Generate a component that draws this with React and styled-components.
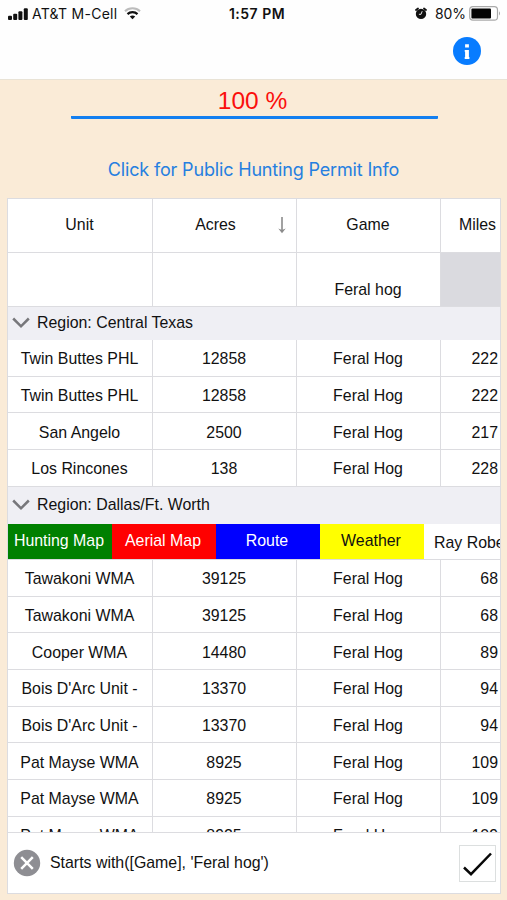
import React from "react";
import styled, { createGlobalStyle } from "styled-components";

const Global = createGlobalStyle`
  * { box-sizing: border-box; }
  body { margin: 0; background: #faebd7; }
`;

const Screen = styled.div`
  width: 507px;
  height: 900px;
  overflow: hidden;
  display: flex;
  flex-direction: column;
  background: #faebd7;
  color: #111;
  font: 15.9px "Liberation Sans", Arial, sans-serif;
  white-space: nowrap;
`;

const TopBar = styled.header`
  height: 80px;
  flex: none;
  background: #fefefe;
  border-bottom: 1px solid #e9e3d6;
`;

const StatusBar = styled.div`
  height: 27px;
  padding: 0 6px 0 8px;
  display: grid;
  grid-template-columns: 1fr auto 1fr;
  align-items: center;
  font-family: Inter, sans-serif;
  font-size: 14px;
`;

const StatusGroup = styled.div`
  display: flex;
  align-items: center;
  justify-content: ${(p) => (p.$end ? "flex-end" : "flex-start")};
`;

const Carrier = styled.span`
  margin: 0 7px 0 4px;
  letter-spacing: 0.26px;
`;

const Clock = styled.span`
  font-weight: 600;
  letter-spacing: 0.5px;
  padding-left: 5px;
`;

const Percent = styled.span`
  margin: 0 3px 0 8px;
  letter-spacing: -0.1px;
`;

const NavBar = styled.div`
  height: 48px;
  display: flex;
  justify-content: flex-end;
  align-items: center;
  padding-right: 26px;
`;

const Progress = styled.div`
  width: 367px;
  height: 39px;
  margin-left: 70.5px;
  flex: none;
  color: #fa0f0c;
  font-size: 24.5px;
  line-height: 41px;
  text-align: center;
  border-bottom: 3px solid #137ff0;
  border-radius: 1px;
  padding-right: 3px;
`;

const PermitLink = styled.a`
  height: 79px;
  flex: none;
  padding-top: 40px;
  color: #267fe0;
  font: 18px/22px Inter, sans-serif;
  letter-spacing: -0.16px;
  text-align: center;
`;

const Grid = styled.main`
  width: 494px;
  height: 696px;
  margin-left: 7px;
  flex: none;
  display: flex;
  flex-direction: column;
  border: 1px solid #dcdce0;
  background: #fff;
`;

const GridBody = styled.div`
  height: 633px;
  flex: none;
  overflow: hidden;
`;

const Row = styled.div`
  display: grid;
  grid-template-columns: 145px 144px 144px 59px;
  height: ${(p) => p.$height || 36.67}px;
  overflow: hidden;
`;

const Cell = styled.div`
  display: flex;
  align-items: center;
  justify-content: ${(p) => (p.$end ? "flex-end" : "center")};
  padding-right: ${(p) => p.$pad ?? 1}px;
  padding-top: ${(p) => p.$drop || 0}px;
  border-right: ${(p) => (p.$last ? 0 : 1)}px solid #dcdce0;
  border-bottom: 1px solid #dcdce0;
  background: ${(p) => (p.$disabled ? "#dadadf" : "#fff")};
`;

const SortCell = styled(Cell)`
  display: grid;
  grid-template-columns: 1fr 8px;
  justify-items: center;
  padding-right: 10px;
`;

const GroupRow = styled.div`
  height: ${(p) => p.$height}px;
  padding-left: 4px;
  display: flex;
  align-items: center;
  gap: 7px;
  background: #efeff4;
`;

const SwipeRow = styled.div`
  display: grid;
  grid-template-columns: 104px 104px 104px 104px 76px;
  height: 36.5px;
  border-bottom: 1px solid #dcdce0;
  overflow: hidden;
`;

const Action = styled.div`
  display: flex;
  align-items: center;
  justify-content: center;
  padding-right: 2px;
  background: ${(p) => p.$bg};
  color: ${(p) => p.$fg || "#fff"};
`;

const SwipedCell = styled.div`
  padding: 10px 0 0 10px;
  overflow: hidden;
`;

const Footer = styled.footer`
  flex: 1;
  display: flex;
  align-items: center;
  border-top: 1px solid #dcdce0;
  padding: 0 4px 0 5px;
`;

const FilterText = styled.span`
  flex: 1;
  margin-left: 9px;
`;

const CheckBox = styled.div`
  width: 37px;
  height: 37px;
  border: 1px solid #dcdfdf;
`;

const Signal = () => (
  <svg width="20" height="14" viewBox="0 0 20 14">
    <g fill="#111">
      <rect x="0" y="8.8" width="4" height="4.2" rx="1" />
      <rect x="5.2" y="6.8" width="4" height="6.2" rx="1" />
      <rect x="10.4" y="4.2" width="4" height="8.8" rx="1" />
      <rect x="15.8" y="1.2" width="4" height="11.8" rx="1" />
    </g>
  </svg>
);

const Wifi = () => (
  <svg width="17" height="13" viewBox="0 0 17 13">
    <path d="M1 4.2C5 0.2 12 0.2 16 4.2" fill="none" stroke="#bcbcbc" strokeWidth="2" />
    <path d="M3.5 7.1C6.2 4.4 10.8 4.4 13.5 7.1" fill="none" stroke="#111" strokeWidth="2.2" />
    <path d="M5.8 9.5C7.2 8.1 9.8 8.1 11.2 9.5L8.5 12.3Z" fill="#111" />
  </svg>
);

const Alarm = () => (
  <svg width="12" height="13" viewBox="0 0 12 13">
    <circle cx="6" cy="6.9" r="5.2" fill="#111" />
    <path d="M1 3L3 1.5M11 3L9 1.5" stroke="#111" strokeWidth="1.8" strokeLinecap="round" />
    <path d="M7.2 4.2L6 7.3H3.9" stroke="#fff" strokeWidth=".9" fill="none" />
  </svg>
);

const Battery = () => (
  <svg width="32" height="15" viewBox="0 0 32 15">
    <rect x=".7" y=".7" width="27.8" height="13.4" rx="3.2" fill="#fff" stroke="#aaa" strokeWidth="1.2" />
    <rect x="2.4" y="2.4" width="19.6" height="10" rx="1" fill="#050505" />
    <path d="M30 5.3Q32 7.4 30 9.5Z" fill="#aaa" />
  </svg>
);

const Info = () => (
  <svg width="28" height="28" viewBox="0 0 28 28">
    <circle cx="14" cy="14" r="14" fill="#087cff" />
    <path d="M12.1 7.2h3.8v3.4h-3.8zM11.7 13h4.2v7.1h.5v2h-4.7v-2h.4v-5.3h-.4z" fill="#fff" />
  </svg>
);

const Chevron = () => (
  <svg width="18" height="12" viewBox="0 0 18 12">
    <path d="M1.2 1.5L9 9.3L16.8 1.5" fill="none" stroke="#77777b" strokeWidth="2.5" />
  </svg>
);

const SortArrow = () => (
  <svg width="8" height="18" viewBox="0 0 8 18">
    <path d="M4 1V14" stroke="#8b8b8b" strokeWidth="1.6" />
    <path d="M.3 12.5L4 14L7.7 12.5L4 17.2Z" fill="#8b8b8b" />
  </svg>
);

const Clear = () => (
  <svg width="28" height="28" viewBox="0 0 28 28">
    <circle cx="14" cy="14" r="13.2" fill="#8e8e93" />
    <path d="M8.2 8.2L19.8 19.8M19.8 8.2L8.2 19.8" stroke="#fff" strokeWidth="2.5" />
  </svg>
);

const Check = () => (
  <svg width="35" height="35" viewBox="0 0 35 35">
    <path d="M4 21.5L11 28.2L31 7.5" fill="none" stroke="#080808" strokeWidth="2.5" />
  </svg>
);

const central = [
  ["Twin Buttes PHL", "12858", "222"],
  ["Twin Buttes PHL", "12858", "222"],
  ["San Angelo", "2500", "217"],
  ["Los Rincones", "138", "228"],
];

const dallas = [
  ["Tawakoni WMA", "39125", "68"],
  ["Tawakoni WMA", "39125", "68"],
  ["Cooper WMA", "14480", "89"],
  ["Bois D'Arc Unit -", "13370", "94"],
  ["Bois D'Arc Unit -", "13370", "94"],
  ["Pat Mayse WMA", "8925", "109"],
  ["Pat Mayse WMA", "8925", "109"],
  ["Pat Mayse WMA", "8925", "109"],
];

const DataRow = ({ data: [unit, acres, miles] }) => (
  <Row>
    <Cell $drop={3}>{unit}</Cell>
    <Cell $drop={3}>{acres}</Cell>
    <Cell $drop={3}>Feral Hog</Cell>
    <Cell $drop={3} $last $end $pad={2}>{miles}</Cell>
  </Row>
);

export default function App() {
  return (
    <Screen>
      <Global />
      <TopBar>
        <StatusBar>
          <StatusGroup>
            <Signal />
            <Carrier>AT&amp;T M-Cell</Carrier>
            <Wifi />
          </StatusGroup>
          <Clock>1:57 PM</Clock>
          <StatusGroup $end>
            <Alarm />
            <Percent>80%</Percent>
            <Battery />
          </StatusGroup>
        </StatusBar>
        <NavBar><Info /></NavBar>
      </TopBar>
      <Progress>100 %</Progress>
      <PermitLink>Click for Public Hunting Permit Info</PermitLink>
      <Grid>
        <GridBody>
          <Row $height={53.5}>
            <Cell>Unit</Cell>
            <SortCell><span>Acres</span><SortArrow /></SortCell>
            <Cell>Game</Cell>
            <Cell $last $end $pad={4}>Miles</Cell>
          </Row>
          <Row $height={54}>
            <Cell />
            <Cell />
            <Cell $drop={21}>Feral hog</Cell>
            <Cell $last $disabled />
          </Row>
          <GroupRow $height={33.5}><Chevron />Region: Central Texas</GroupRow>
          {central.map((r, i) => <DataRow key={i} data={r} />)}
          <GroupRow $height={37}><Chevron />Region: Dallas/Ft. Worth</GroupRow>
          <SwipeRow>
            <Action $bg="#008000">Hunting Map</Action>
            <Action $bg="#ff0000">Aerial Map</Action>
            <Action $bg="#0000ff">Route</Action>
            <Action $bg="#ffff00" $fg="#111">Weather</Action>
            <SwipedCell>Ray Roberts</SwipedCell>
          </SwipeRow>
          {dallas.map((r, i) => <DataRow key={i} data={r} />)}
        </GridBody>
        <Footer>
          <Clear />
          <FilterText>Starts with([Game], 'Feral hog')</FilterText>
          <CheckBox><Check /></CheckBox>
        </Footer>
      </Grid>
    </Screen>
  );
}
